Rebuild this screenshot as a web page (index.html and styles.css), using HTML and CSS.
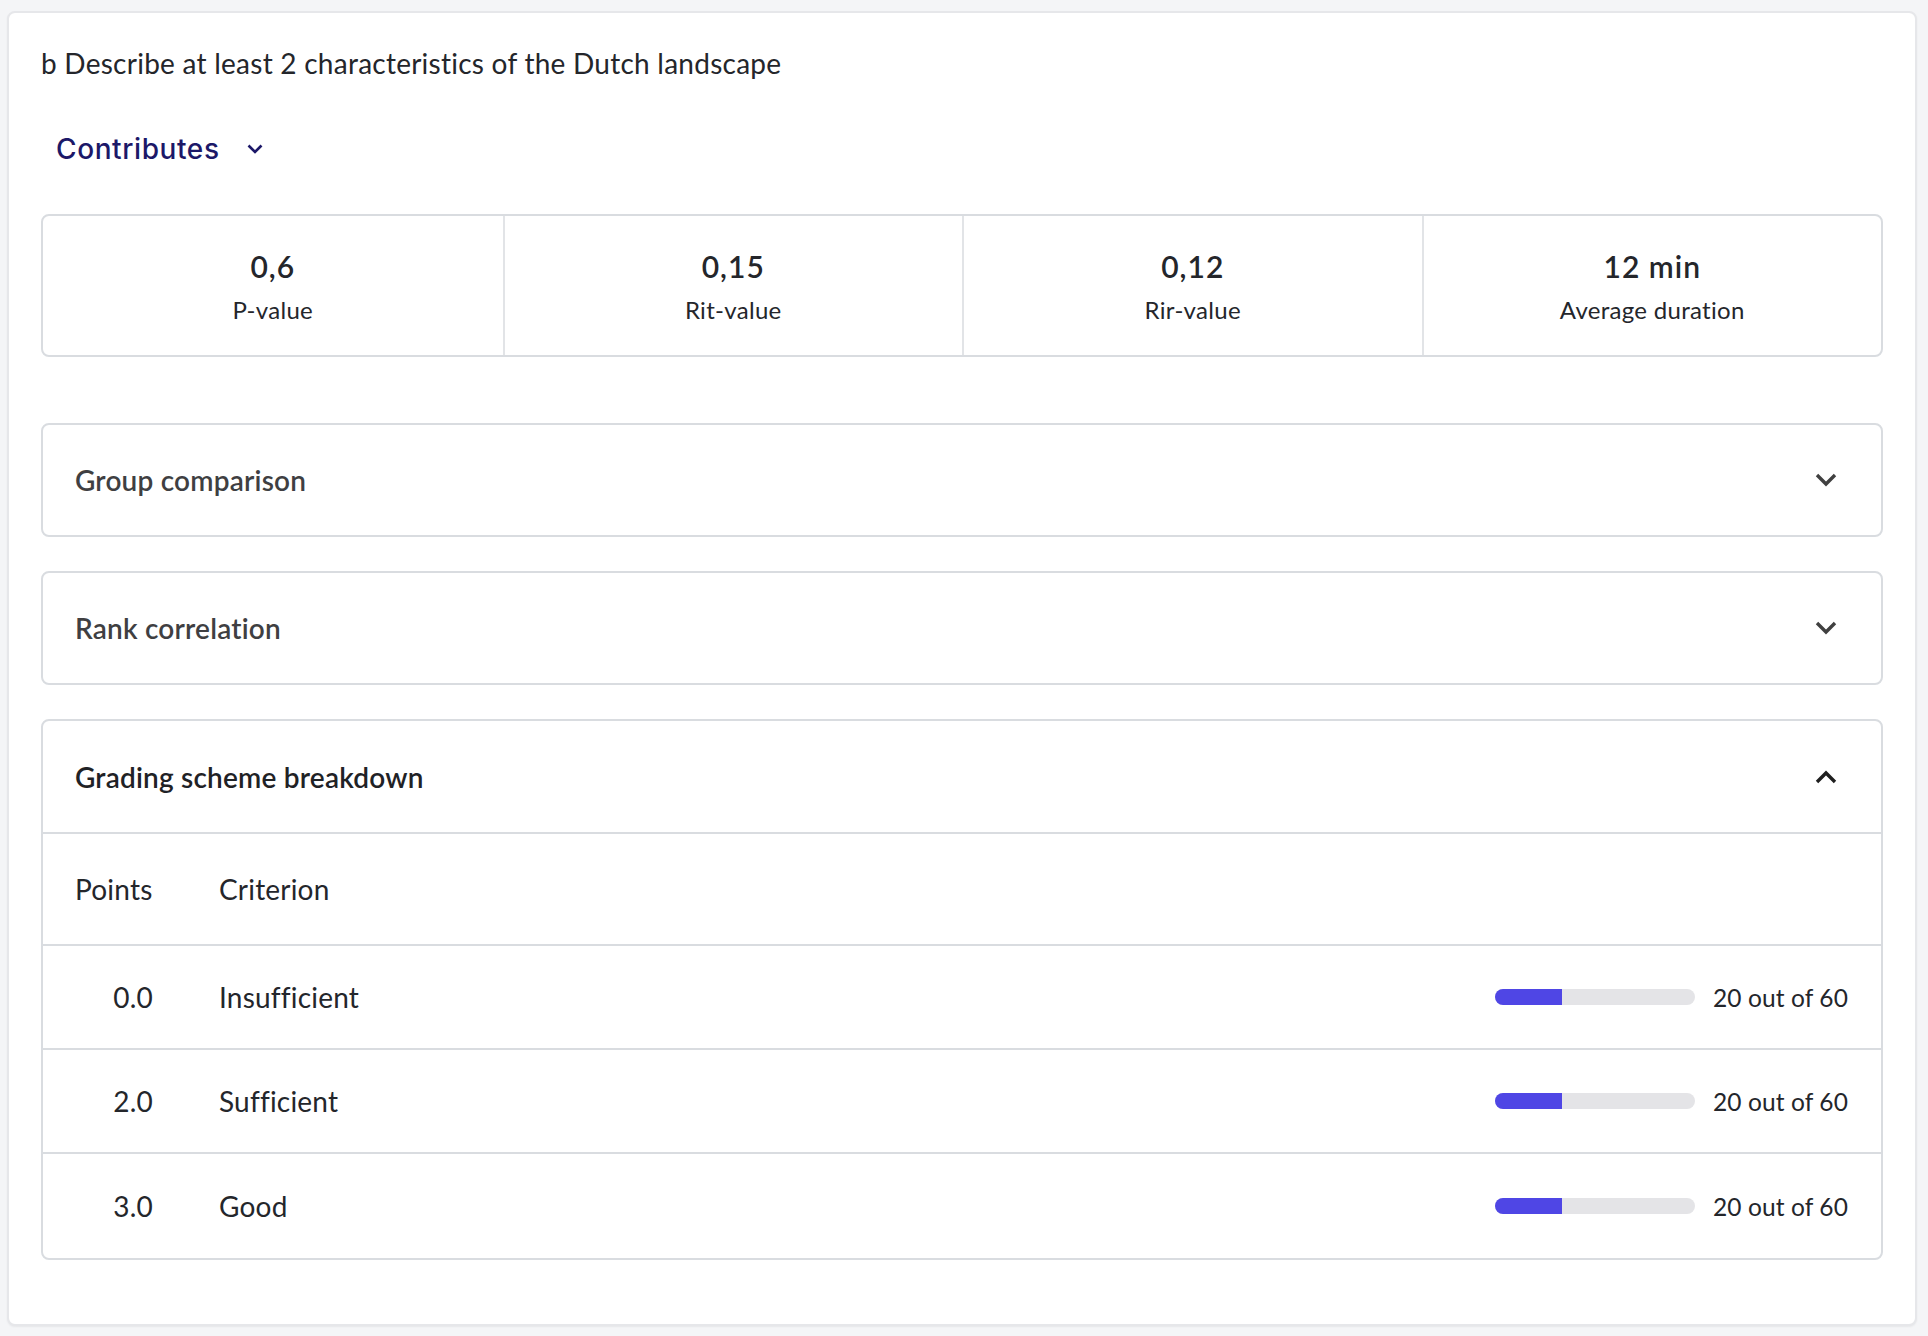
FILE: index.html
```html
<!DOCTYPE html>
<html lang="en">
<head>
  <meta charset="UTF-8">
  <meta name="viewport" content="width=device-width, initial-scale=1.0">
  <title>Question analysis</title>
  <link rel="stylesheet" href="styles.css">
</head>
<body>
<div class="card">
  <p class="question">b Describe at least 2 characteristics of the Dutch landscape</p>

  <button class="contributes" type="button">
    <span>Contributes</span>
    <svg class="small-chevron" viewBox="0 0 16 10" width="16" height="10"><polyline points="1.5,1.5 8,8 14.5,1.5"/></svg>
  </button>

  <div class="stats">
    <div class="stat">
      <div class="stat-value">0,6</div>
      <div class="stat-label">P-value</div>
    </div>
    <div class="stat">
      <div class="stat-value">0,15</div>
      <div class="stat-label">Rit-value</div>
    </div>
    <div class="stat">
      <div class="stat-value">0,12</div>
      <div class="stat-label">Rir-value</div>
    </div>
    <div class="stat">
      <div class="stat-value">12 min</div>
      <div class="stat-label">Average duration</div>
    </div>
  </div>

  <div class="panels">
    <div class="panel">
      <div class="panel-header">
        <span class="panel-title">Group comparison</span>
        <svg class="chevron" viewBox="0 0 22 14" width="22" height="14"><polyline points="2,2 11,11 20,2"/></svg>
      </div>
    </div>

    <div class="panel">
      <div class="panel-header">
        <span class="panel-title">Rank correlation</span>
        <svg class="chevron" viewBox="0 0 22 14" width="22" height="14"><polyline points="2,2 11,11 20,2"/></svg>
      </div>
    </div>

    <div class="panel open">
      <div class="panel-header">
        <span class="panel-title">Grading scheme breakdown</span>
        <svg class="chevron" viewBox="0 0 22 14" width="22" height="14"><polyline points="2,12 11,3 20,12"/></svg>
      </div>

      <div class="grade-row grade-head">
        <div class="col-points">Points</div>
        <div class="col-criterion">Criterion</div>
      </div>
      <div class="grade-row">
        <div class="col-points num">0.0</div>
        <div class="col-criterion">Insufficient</div>
        <div class="bar"><div class="bar-fill" style="width: 33.3%"></div></div>
        <div class="count">20 out of 60</div>
      </div>
      <div class="grade-row">
        <div class="col-points num">2.0</div>
        <div class="col-criterion">Sufficient</div>
        <div class="bar"><div class="bar-fill" style="width: 33.3%"></div></div>
        <div class="count">20 out of 60</div>
      </div>
      <div class="grade-row">
        <div class="col-points num">3.0</div>
        <div class="col-criterion">Good</div>
        <div class="bar"><div class="bar-fill" style="width: 33.3%"></div></div>
        <div class="count">20 out of 60</div>
      </div>
    </div>
  </div>
</div>
</body>
</html>
```

FILE: styles.css
```css
:root {
  --text-color: #24262b;
  --muted-title: #3f3f42;
  --navy: #1c1868;
  --border-color: #d9dce0;
  --bar-color: #4f46e5;
  --track-color: #e4e4e7;
  --radius: 8px;
}

* {
  margin: 0;
  padding: 0;
  box-sizing: border-box;
}

body {
  background-color: #f4f5f7;
  color: var(--text-color);
  font-family: 'Lato', 'Noto Sans', sans-serif;
  padding: 11px 11px 11px 7px;
}

.card {
  background: white;
  border: 2px solid #e6e7ea;
  border-radius: var(--radius);
  box-shadow: 0 1px 2px rgba(0, 0, 0, 0.06);
  padding: 32px 32px 64px;
}

.question {
  font-size: 28px;
  line-height: 36px;
  letter-spacing: 0.25px;
}

.contributes {
  display: flex;
  align-items: center;
  gap: 27px;
  height: 48px;
  margin: 44px 0 41px;
  padding: 0 15px;
  background: none;
  border: none;
  color: var(--navy);
  font-family: 'Inter', sans-serif;
  font-size: 28px;
  font-weight: 500;
  letter-spacing: 0.6px;
  cursor: pointer;
}

.small-chevron polyline {
  fill: none;
  stroke: var(--navy);
  stroke-width: 2.6;
}

/* stats strip */
.stats {
  display: grid;
  grid-template-columns: repeat(4, 1fr);
  border: 2px solid var(--border-color);
  border-radius: var(--radius);
}

.stat {
  text-align: center;
  padding: 32px 0 31px;
}

.stat + .stat {
  border-left: 2px solid #e2e4e7;
}

.stat-value {
  font-size: 30px;
  line-height: 36px;
  font-weight: 600;
  letter-spacing: 1px;
}

.stat-label {
  font-size: 24px;
  line-height: 28px;
  letter-spacing: 0.3px;
  margin-top: 12px;
}

/* collapsible panels */
.panels {
  display: flex;
  flex-direction: column;
  gap: 34px;
  margin-top: 66px;
}

.panel {
  border: 2px solid var(--border-color);
  border-radius: var(--radius);
}

.panel-header {
  display: flex;
  align-items: center;
  justify-content: space-between;
  height: 110px;
  padding: 0 44px 0 32px;
}

.panel-title {
  font-size: 28px;
  font-weight: 600;
  letter-spacing: 0.2px;
  color: var(--muted-title);
}

.chevron polyline {
  fill: none;
  stroke: #404040;
  stroke-width: 3.4;
}

.panel.open .panel-header {
  height: 113px;
  border-bottom: 2px solid var(--border-color);
}

.panel.open .panel-title {
  color: #1f2226;
}

.panel.open .chevron polyline {
  stroke: #1f1f1f;
}

/* grading table */
.grade-row {
  display: flex;
  align-items: center;
  height: 104px;
  padding: 0 33px 0 32px;
  font-size: 28px;
  letter-spacing: 0.2px;
  border-bottom: 2px solid var(--border-color);
}

.grade-row:last-child {
  border-bottom: none;
}

.grade-head {
  height: 112px;
}

.col-points {
  width: 78px;
}

.col-points.num {
  text-align: right;
}

.col-criterion {
  flex: 1;
  margin-left: 66px;
}

.bar {
  flex-shrink: 0;
  width: 200px;
  height: 16px;
  background-color: var(--track-color);
  border-radius: 8px;
  overflow: hidden;
}

.bar-fill {
  height: 100%;
  background-color: var(--bar-color);
}

.count {
  flex-shrink: 0;
  margin-left: 18px;
  white-space: nowrap;
  font-size: 24.5px;
  letter-spacing: 0.1px;
}
```
